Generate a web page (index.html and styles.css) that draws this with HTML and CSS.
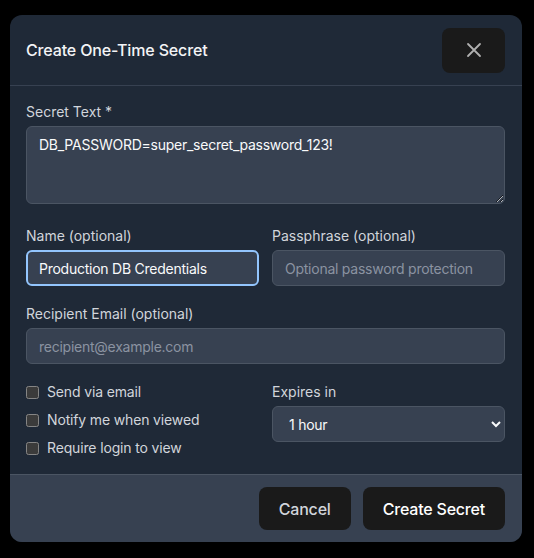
FILE: index.html
```html
<!DOCTYPE html>
<html lang="en">
<head>
<meta charset="utf-8">
<title>Create One-Time Secret</title>
<link rel="stylesheet" href="styles.css">
</head>
<body>
<div class="modal">
  <div class="modal-header">
    <h2 class="title">Create One-Time Secret</h2>
    <button class="btn close-btn" aria-label="Close">
      <svg width="24" height="24" viewBox="0 0 24 24" fill="none" stroke="currentColor" stroke-width="2" stroke-linecap="round" stroke-linejoin="round"><path d="M6 18L18 6M6 6l12 12"/></svg>
    </button>
  </div>
  <div class="modal-body">
    <div class="field field-textarea">
      <label class="label">Secret Text *</label>
      <textarea class="control textarea" rows="3">DB_PASSWORD=super_secret_password_123!</textarea>
    </div>
    <div class="row">
      <div class="field">
        <label class="label">Name (optional)</label>
        <input class="control focused" type="text" value="Production DB Credentials">
      </div>
      <div class="field">
        <label class="label">Passphrase (optional)</label>
        <input class="control" type="text" placeholder="Optional password protection">
      </div>
    </div>
    <div class="field">
      <label class="label">Recipient Email (optional)</label>
      <input class="control" type="email" placeholder="recipient@example.com">
    </div>
    <div class="row">
      <div class="checks">
        <label class="check"><input type="checkbox"><span>Send via email</span></label>
        <label class="check"><input type="checkbox"><span>Notify me when viewed</span></label>
        <label class="check"><input type="checkbox"><span>Require login to view</span></label>
      </div>
      <div class="field">
        <label class="label">Expires in</label>
        <select class="control select">
          <option>1 hour</option>
        </select>
      </div>
    </div>
  </div>
  <div class="modal-footer">
    <button class="btn cancel">Cancel</button>
    <button class="btn primary">Create Secret</button>
  </div>
</div>
</body>
</html>
```
FILE: styles.css
```css
:root {
  color-scheme: dark;
}
* {
  box-sizing: border-box;
}
body {
  margin: 0;
  background: #000;
  font-family: Inter, "Noto Sans", "Liberation Sans", sans-serif;
  color: #f3f4f6;
}
.modal {
  margin: 15px 0 0 10px;
  width: 512px;
  background: #1f2937;
  border-radius: 12px;
  overflow: hidden;
}
.modal-header {
  display: flex;
  align-items: center;
  justify-content: space-between;
  height: 71px;
  padding: 0 17px 0 16px;
  border-bottom: 1px solid #374151;
}
.title {
  margin: 0;
  font-size: 16px;
  font-weight: 500;
  letter-spacing: -0.15px;
  color: #f3f4f6;
}
.btn {
  font-family: inherit;
  border-radius: 8px;
  border: 1px solid transparent;
  padding: 0 19px;
  height: 43px;
  font-size: 16px;
  line-height: 24px;
  font-weight: 500;
  letter-spacing: -0.2px;
  background: #1a1a1a;
  color: #f3f4f6;
  cursor: pointer;
}
.close-btn {
  display: flex;
  align-items: center;
  justify-content: center;
  width: 63px;
  height: 45px;
  padding: 0;
  color: #b0b0b0;
}
.close-btn svg {
  width: 24px;
  height: 24px;
  stroke-width: 1.8;
}
.modal-body {
  padding: 16px 17px 16px 16px;
  display: flex;
  flex-direction: column;
  gap: 18px;
}
.field-textarea {
  margin-bottom: 4px;
}
.field {
  display: flex;
  flex-direction: column;
  gap: 4px;
  min-width: 0;
}
.label {
  font-size: 14px;
  line-height: 20px;
  color: #d1d5db;
  font-weight: 400;
}
.control {
  display: block;
  width: 100%;
  font-family: inherit;
  font-size: 14px;
  line-height: 20px;
  letter-spacing: -0.25px;
  color: #f9fafb;
  background: #374151;
  border: 1px solid #4b5563;
  border-radius: 6px;
  padding: 7px 12px;
  height: 36px;
  outline: none;
}
.control::placeholder {
  color: #8b93a1;
}
.textarea {
  height: 78px;
  padding: 8px 12px;
  resize: vertical;
}
.focused {
  border: 2px solid #93c5fd;
  padding: 6px 11px;
}
.row {
  display: grid;
  grid-template-columns: 1fr 1fr;
  gap: 13px;
}
.checks {
  display: flex;
  flex-direction: column;
  gap: 8px;
}
.check {
  display: flex;
  align-items: center;
  gap: 8px;
  font-size: 14px;
  line-height: 20px;
  letter-spacing: -0.15px;
  color: #d1d5db;
}
.check input {
  margin: 0;
  width: 13px;
  height: 13px;
}
.select {
  padding: 7px 8px 7px 12px;
  font-size: 14px;
}
.modal-footer {
  display: flex;
  justify-content: flex-end;
  gap: 12px;
  padding: 12px 17px 12px 16px;
  background: #374151;
  border-top: 1px solid #4b5563;
}
.cancel {
  color: #d1d5db;
}
.primary {
  color: #ffffff;
}
```
